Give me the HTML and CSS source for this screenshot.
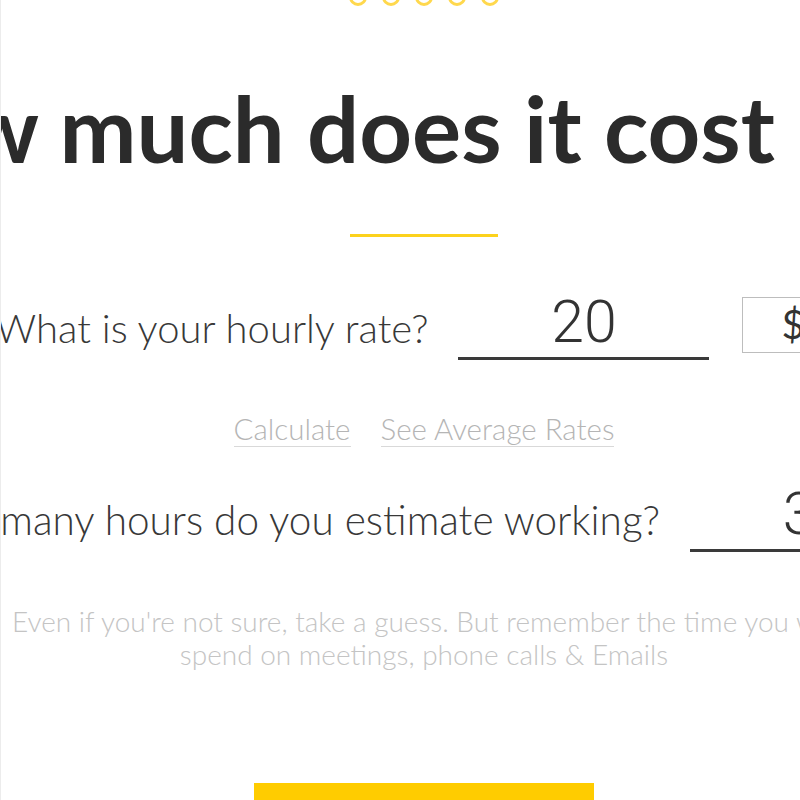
FILE: index.html
```html
<!DOCTYPE html>
<html>
<head>
<meta charset="utf-8">
<link rel="stylesheet" href="styles.css">
</head>
<body>
<div class="page">
  <div class="rating">
    <span class="dot"></span><span class="dot"></span><span class="dot dot-inner"></span><span class="dot"></span><span class="dot"></span>
  </div>
  <h1 class="title">How much does it cost <span class="title-end">you?</span></h1>
  <div class="divider"></div>
  <div class="row row-rate">
    <label class="label label-rate">What is your hourly rate?</label>
    <div class="field field-rate">20</div>
    <div class="currency">$ <span class="caret">&#9662;</span></div>
  </div>
  <div class="links">
    <a class="link">Calculate</a>
    <a class="link">See Average Rates</a>
  </div>
  <div class="row row-hours">
    <label class="label">How many hours do you estimate working?</label>
    <div class="field field-hours">35</div>
  </div>
  <p class="hint">Even if you're not sure, take a guess. But remember the time you will<br>spend on meetings, phone calls &amp; Emails</p>
  <div class="cta">
    <button class="button">Next</button>
  </div>
</div>
</body>
</html>
```

FILE: styles.css
```css
html, body {
  margin: 0;
  padding: 0;
  background: #ffffff;
  overflow: hidden;
  height: 800px;
}
body {
  border-left: 1px solid #ececec;
  box-sizing: border-box;
}
.page {
  width: 1046px;
  margin-left: -100px;
  font-family: "Lato", "Liberation Sans", sans-serif;
  color: #333333;
  display: flex;
  flex-direction: column;
  align-items: center;
}
.rating {
  display: flex;
  gap: 15px;
  margin-top: -12px;
  height: 17px;
}
.dot {
  width: 12px;
  height: 12px;
  border: 3px solid #ffd84d;
  border-radius: 50%;
  display: block;
}
.title {
  margin: 68px 0 0 0;
  font-size: 92px;
  font-weight: 700;
  color: #2b2b2b;
  white-space: nowrap;
  line-height: 110px;
}
.title-end {
  margin-left: 14px;
}
.divider {
  width: 148px;
  height: 3px;
  background: #fcd21c;
  margin-top: 51px;
}
.row {
  display: flex;
  align-items: flex-end;
  white-space: nowrap;
}
.row-rate {
  margin-top: 54px;
}
.label {
  font-size: 40.5px;
  font-weight: 300;
  color: #383838;
  line-height: 48px;
  margin-bottom: 8px;
}
.label-rate {
  font-size: 40px;
}
.field {
  width: 251px;
  border-bottom: 3px solid #3a3a3a;
  text-align: center;
  font-family: "Roboto", "Liberation Sans", sans-serif;
  font-weight: 300;
  font-size: 59px;
  line-height: 62px;
  padding-bottom: 4px;
  color: #333333;
}
.field-rate {
  margin-left: 30px;
}
.field-hours {
  margin-left: 30px;
}
.currency {
  width: 110px;
  height: 56px;
  box-sizing: border-box;
  border: 1px solid #bdbdbd;
  margin-left: 33px;
  margin-bottom: 7px;
  font-size: 40px;
  font-weight: 400;
  line-height: 52px;
  padding-left: 38px;
  color: #333;
}
.caret {
  font-size: 14px;
  vertical-align: middle;
}
.links {
  display: flex;
  gap: 30px;
  margin-top: 52px;
}
.link {
  font-size: 29.5px;
  font-weight: 300;
  color: #b5b5b5;
  border-bottom: 1px solid #d9d9d9;
  line-height: 34px;
}
.row-hours {
  margin-top: 36px;
}
.hint {
  margin: 53px 0 0 0;
  font-size: 28px;
  font-weight: 300;
  color: #c4c4c4;
  text-align: center;
  line-height: 33px;
  white-space: nowrap;
}
.cta {
  margin-top: 112px;
}
.button {
  width: 340px;
  height: 72px;
  background: #ffcc00;
  border: none;
  font-family: "Lato", sans-serif;
  font-size: 22px;
  color: #2b2b2b;
}
```
